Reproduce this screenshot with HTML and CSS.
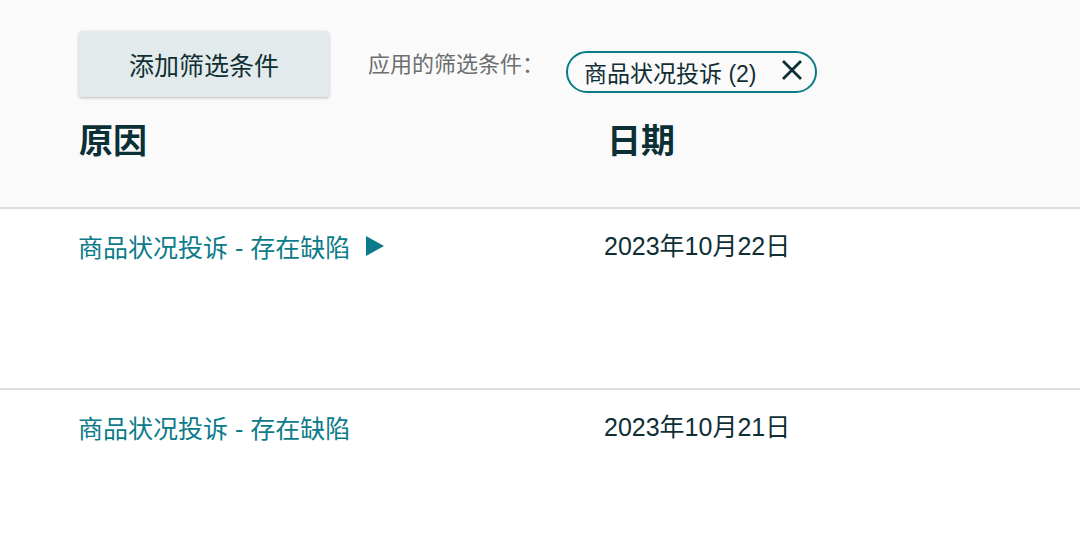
FILE: index.html
```html
<!DOCTYPE html>
<html lang="zh">
<head>
<meta charset="utf-8">
<link rel="stylesheet" href="styles.css">
</head>
<body>
<div class="head">
  <div class="filters">
    <button class="add-btn">添加筛选条件</button>
    <span class="applied-label">应用的筛选条件：</span>
    <span class="chip">商品状况投诉 (2)
      <svg class="chip-x" width="22" height="22" viewBox="0 0 22 22"><path d="M2 2 L20 20 M20 2 L2 20" stroke="#0f2f35" stroke-width="2.8" stroke-linecap="butt"/></svg>
    </span>
  </div>
  <div class="cols">
    <div class="col-h reason-h">原因</div>
    <div class="col-h date-h">日期</div>
  </div>
</div>
<div class="row">
  <div class="reason">商品状况投诉 - 存在缺陷 <span class="tri"></span></div>
  <div class="date">2023年10月22日</div>
</div>
<div class="row">
  <div class="reason">商品状况投诉 - 存在缺陷</div>
  <div class="date">2023年10月21日</div>
</div>
</body>
</html>
```
FILE: styles.css
```css
* { box-sizing: border-box; }
html, body { margin: 0; padding: 0; }
body {
  font-family: "Liberation Sans", "Noto Sans CJK SC", sans-serif;
  background: #ffffff;
  width: 1080px;
  overflow: hidden;
}
.head {
  background: #fafafa;
  padding: 31px 0 0 79px;
  height: 209px;
  border-bottom: 2px solid #dedede;
}
.filters {
  display: flex;
  align-items: flex-start;
}
.add-btn {
  width: 250px;
  height: 66px;
  border: none;
  border-radius: 3px;
  background: #e3eaeb;
  box-shadow: 0 1px 3px rgba(0,0,0,0.25);
  font-family: "Liberation Sans", "Noto Sans CJK SC", sans-serif;
  font-size: 25px;
  color: #0f2f35;
  padding: 0;
}
.applied-label {
  margin: 19px 0 0 39px;
  font-size: 22px;
  color: #6b6f70;
  line-height: 30px;
}
.chip {
  margin: 20px 0 0 22px;
  height: 42px;
  width: 251px;
  border: 2px solid #0b7b89;
  border-radius: 21px;
  display: flex;
  align-items: center;
  padding: 0 0 0 16px;
  font-size: 23px;
  color: #0f2f35;
}
.chip-x { margin-left: 24px; margin-top: -4px; }
.cols {
  display: grid;
  grid-template-columns: 528px 1fr;
  margin-top: 22px;
}
.col-h {
  font-size: 34px;
  font-weight: bold;
  color: #0a3036;
  line-height: 44px;
}
.row {
  height: 181px;
  border-bottom: 2px solid #dedede;
  display: grid;
  grid-template-columns: 526px 1fr;
  align-items: start;
  padding: 20px 0 0 78px;
}
.reason {
  font-size: 25px;
  color: #0b7b89;
  line-height: 34px;
  display: flex;
  align-items: center;
  margin-top: 2px;
}
.tri {
  display: inline-block;
  width: 0; height: 0;
  border-left: 18px solid #0b7b89;
  border-top: 10px solid transparent;
  border-bottom: 10px solid transparent;
  margin-left: 16px;
  margin-top: -4px;
}
.date {
  font-size: 25px;
  color: #0f2f35;
  line-height: 34px;
}
```
